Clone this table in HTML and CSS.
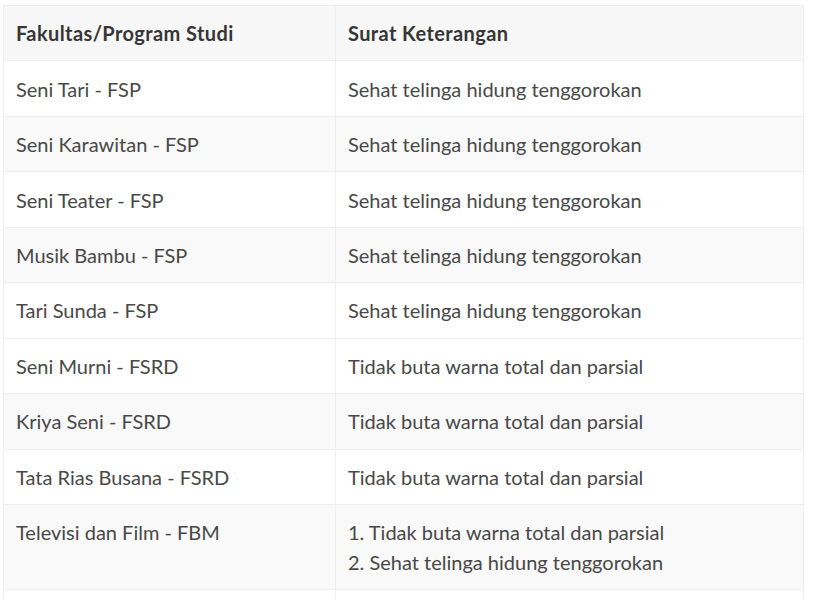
FILE: index.html
```html
<!DOCTYPE html>
<html lang="id">
<head>
<meta charset="utf-8">
<title>Surat Keterangan</title>
<link rel="stylesheet" href="styles.css">
</head>
<body>
<div class="wrap">
  <table class="req">
    <thead>
      <tr><th class="c1">Fakultas/Program Studi</th><th>Surat Keterangan</th></tr>
    </thead>
    <tbody>
      <tr><td>Seni Tari - FSP</td><td>Sehat telinga hidung tenggorokan</td></tr>
      <tr class="alt"><td>Seni Karawitan - FSP</td><td>Sehat telinga hidung tenggorokan</td></tr>
      <tr><td>Seni Teater - FSP</td><td>Sehat telinga hidung tenggorokan</td></tr>
      <tr class="alt"><td>Musik Bambu - FSP</td><td>Sehat telinga hidung tenggorokan</td></tr>
      <tr><td>Tari Sunda - FSP</td><td>Sehat telinga hidung tenggorokan</td></tr>
      <tr><td>Seni Murni - FSRD</td><td>Tidak buta warna total dan parsial</td></tr>
      <tr class="alt"><td>Kriya Seni - FSRD</td><td>Tidak buta warna total dan parsial</td></tr>
      <tr><td>Tata Rias Busana - FSRD</td><td>Tidak buta warna total dan parsial</td></tr>
      <tr class="alt"><td>Televisi dan Film - FBM</td><td><div>1. Tidak buta warna total dan parsial</div><div>2. Sehat telinga hidung tenggorokan</div></td></tr>
      <tr><td>&nbsp;</td><td>&nbsp;</td></tr>
    </tbody>
  </table>
</div>
</body>
</html>
```
FILE: styles.css
```css
html, body {
  margin: 0;
  padding: 0;
  background: #fff;
}
body {
  font-family: Lato, "Open Sans", sans-serif;
  font-size: 20px;
  line-height: 30px;
  color: #484848;
}
.wrap {
  padding: 5px 11px 0 3px;
}
.req {
  width: 801px;
  border-collapse: collapse;
  border: 1px solid #eeeeee;
  table-layout: fixed;
}
.req th, .req td {
  text-align: left;
  vertical-align: top;
  padding: 12.25px 12px 12.2px;
  border: 1px solid #eeeeee;
}
.req th {
  font-weight: 700;
  color: #363636;
  letter-spacing: 0.4px;
  background: #f7f7f7;
}
.req .c1 {
  width: 307px;
}
.req tr.alt td {
  background: #f9f9f9;
}
```
